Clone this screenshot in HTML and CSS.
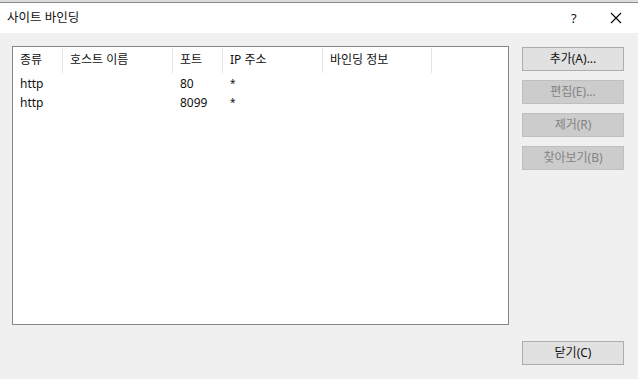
FILE: index.html
```html
<!DOCTYPE html>
<html lang="ko">
<head>
	<meta charset="UTF-8">
	<title>사이트 바인딩</title>
	<link rel="stylesheet" href="styles.css">
</head>
<body>
	<div class="topstrip"></div>
	<div class="titlebar">
		<span class="title">사이트 바인딩</span>
		<span class="help">?</span>
		<span class="close">
			<svg width="12" height="12" viewBox="0 0 12 12"><path d="M1 1 L11 11 M11 1 L1 11" stroke="#000" stroke-width="1.1" fill="none"/></svg>
		</span>
	</div>
	<div class="main">
		<div class="listbox">
			<div class="grid head">
				<div class="cell">종류</div>
				<div class="cell">호스트 이름</div>
				<div class="cell">포트</div>
				<div class="cell">IP 주소</div>
				<div class="cell">바인딩 정보</div>
			</div>
			<div class="grid row">
				<div class="cell">http</div>
				<div class="cell"></div>
				<div class="cell">80</div>
				<div class="cell star">*</div>
				<div class="cell"></div>
			</div>
			<div class="grid row">
				<div class="cell">http</div>
				<div class="cell"></div>
				<div class="cell">8099</div>
				<div class="cell star">*</div>
				<div class="cell"></div>
			</div>
		</div>
		<div class="btns">
			<div class="btn">추가(A)...</div>
			<div class="btn off">편집(E)...</div>
			<div class="btn off">제거(R)</div>
			<div class="btn off">찾아보기(B)</div>
		</div>
	</div>
	<div class="foot">
		<div class="btn">닫기(C)</div>
	</div>
</body>
</html>
```
FILE: styles.css
```css
*{
	margin: 0;
	padding: 0;
	box-sizing: border-box;
}
body{
	width: 638px;
	height: 379px;
	background: #f0f0f0;
	font-family: "Noto Sans", "Noto Sans CJK KR", sans-serif;
	font-size: 12px;
	color: #111;
	overflow: hidden;
}
.topstrip{
	height: 3px;
	background: #dcdcdc;
	border-bottom: 1px solid #8c8c8c;
}
.titlebar{
	height: 30px;
	background: #fff;
	display: flex;
	align-items: center;
	padding-left: 7px;
}
.title{
	flex: 1;
	font-size: 12.5px;
	line-height: 16px;
	padding-bottom: 1px;
}
.help{
	width: 12px;
	font-size: 13px;
	line-height: 16px;
	margin-right: 27px;
}
.close{
	display: flex;
	margin-right: 16px;
	margin-bottom: 1px;
}
.main{
	display: flex;
	padding: 13px 0 0 12px;
}
.listbox{
	width: 497px;
	height: 279px;
	background: #fff;
	border: 1px solid #828790;
	padding-top: 1px;
}
.grid{
	display: grid;
	grid-template-columns: 50px 110px 50px 100px 109px;
}
.head{
	height: 25px;
	margin-bottom: 1px;
}
.head .cell{
	border-right: 1px solid #e5e5e5;
	line-height: 24px;
}
.row{
	height: 19px;
}
.cell{
	padding-left: 7px;
	line-height: 19px;
	white-space: nowrap;
}
.star{
	font-size: 10px;
}
.btns{
	display: flex;
	flex-direction: column;
	gap: 9px;
	margin-left: 13px;
	padding-top: 1px;
}
.btn{
	width: 102px;
	height: 24px;
	background: #e1e1e1;
	border: 1px solid #adadad;
	text-align: center;
	line-height: 21px;
}
.btn.off{
	background: #cccccc;
	border-color: #bfbfbf;
	color: #838383;
}
.foot{
	display: flex;
	justify-content: flex-end;
	padding: 16px 14px 0 0;
}
```
